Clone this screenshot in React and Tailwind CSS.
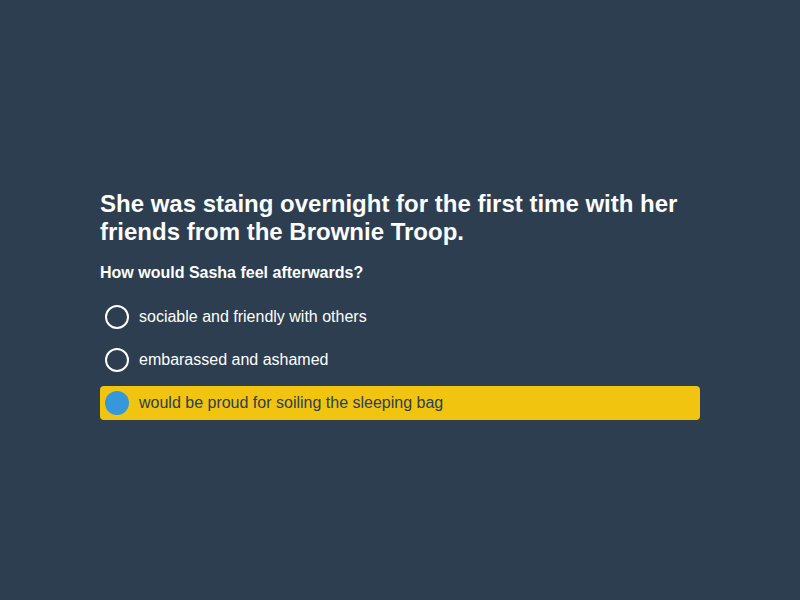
import { useState } from 'react';

const options = [
  'sociable and friendly with others',
  'embarassed and ashamed',
  'would be proud for soiling the sleeping bag',
];

const App = () => {
  const [selected, setSelected] = useState(2);

  return (
    <div className="min-h-screen bg-[#2c3e50] flex items-center justify-center pt-[9px] font-['Liberation_Sans',Arial,sans-serif]">
      <div className="w-[600px]">
        {/* Story */}
        <h1 className="text-[24px] leading-[28px] font-bold text-white mb-[17px]">
          She was staing overnight for the first time with her friends from the Brownie Troop.
        </h1>

        {/* Question */}
        <h2 className="text-[16px] leading-[20px] font-bold text-white mb-[17px]">
          How would Sasha feel afterwards?
        </h2>

        {/* Answers */}
        <div className="flex flex-col gap-[9px]">
          {options.map((option, i) => (
            <button
              key={option}
              onClick={() => setSelected(i)}
              className={`flex items-center gap-[10px] p-[5px] rounded-[4px] text-left text-[16px] ${
                selected === i ? 'bg-[#f1c40f] text-[#2c3e50]' : 'text-white'
              }`}
            >
              <span
                className={`w-[24px] h-[24px] rounded-full shrink-0 ${
                  selected === i ? 'bg-[#3498db]' : 'border-2 border-white'
                }`}
              />
              {option}
            </button>
          ))}
        </div>
      </div>
    </div>
  );
};

export default App;
